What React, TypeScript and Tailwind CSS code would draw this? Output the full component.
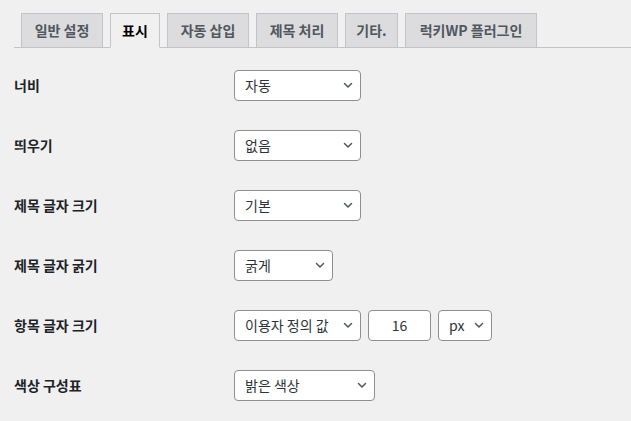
import React from "react";

const FONT = { fontFamily: '"Noto Sans CJK KR", "Noto Sans", sans-serif' };

const tabs = [
  { label: "일반 설정", w: "w-[82px]" },
  { label: "표시", w: "w-[50px]", active: true },
  { label: "자동 삽입", w: "w-[82px]" },
  { label: "제목 처리", w: "w-[82px]" },
  { label: "기타.", w: "w-[53px]" },
  { label: "럭키WP 플러그인", w: "w-[132px]" },
];

const Chevron = () => (
  <svg width="12" height="12" viewBox="0 0 12 12" className="shrink-0">
    <polyline
      points="2.5,4.5 6,8 9.5,4.5"
      fill="none"
      stroke="#50575e"
      strokeWidth="1.5"
      strokeLinecap="round"
      strokeLinejoin="round"
    />
  </svg>
);

const Select = ({ value, w }: { value: string; w: string }) => (
  <div
    className={`${w} h-[31px] bg-white border border-[#8c8f94] rounded-[4px] flex items-center justify-between pl-[10px] pr-[6px] text-[14px] text-[#2c3338]`}
  >
    <span className="whitespace-nowrap">{value}</span>
    <Chevron />
  </div>
);

const Row = ({ label, children }: { label: string; children: React.ReactNode }) => (
  <div className="h-[60px] flex items-center">
    <div className="w-[220px] text-[14px] font-semibold text-[#1d2327]">{label}</div>
    <div className="flex items-center gap-[7px]">{children}</div>
  </div>
);

export default function App() {
  return (
    <div className="w-[631px] h-[421px] bg-[#f0f0f1] overflow-hidden" style={FONT}>
      <div className="pt-[13px] pl-[14px]">
        <div className="flex items-end border-b border-[#c3c4c7]">
          {tabs.map((t) => (
            <div
              key={t.label}
              className={`${t.w} ml-[7px] h-[35px] -mb-px flex items-center justify-center border border-[#c3c4c7] text-[14px] font-semibold whitespace-nowrap ${
                t.active
                  ? "bg-[#f0f0f1] border-b-[#f0f0f1] text-black"
                  : "bg-[#dcdcde] text-[#50575e]"
              }`}
            >
              {t.label}
            </div>
          ))}
        </div>
        <div className="pt-[7px]">
          <Row label="너비">
            <Select value="자동" w="w-[127px]" />
          </Row>
          <Row label="띄우기">
            <Select value="없음" w="w-[127px]" />
          </Row>
          <Row label="제목 글자 크기">
            <Select value="기본" w="w-[127px]" />
          </Row>
          <Row label="제목 글자 굵기">
            <Select value="굵게" w="w-[99px]" />
          </Row>
          <Row label="항목 글자 크기">
            <Select value="이용자 정의 값" w="w-[127px]" />
            <div className="w-[63px] h-[31px] bg-white border border-[#8c8f94] rounded-[4px] flex items-center justify-center text-[14px] text-[#2c3338]">
              16
            </div>
            <Select value="px" w="w-[54px]" />
          </Row>
          <Row label="색상 구성표">
            <Select value="밝은 색상" w="w-[141px]" />
          </Row>
        </div>
      </div>
    </div>
  );
}
